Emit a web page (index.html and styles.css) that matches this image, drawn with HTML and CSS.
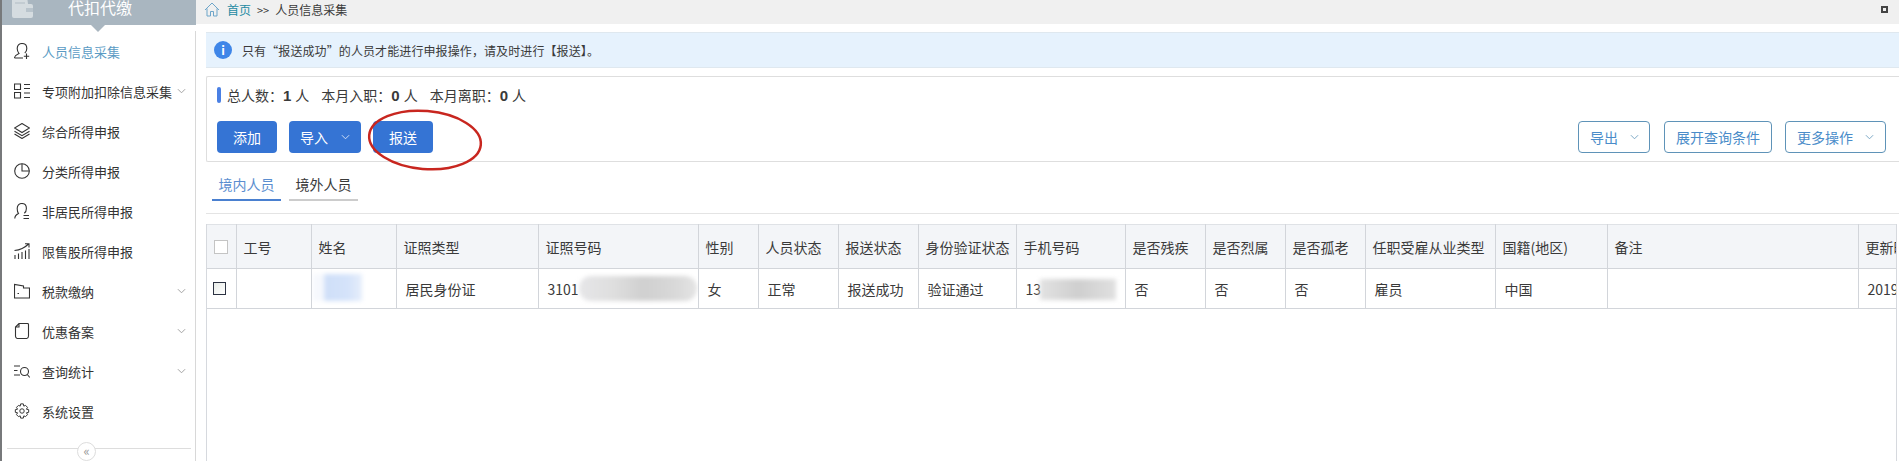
FILE: index.html
```html
<!DOCTYPE html>
<html lang="zh-CN">
<head>
  <meta charset="UTF-8" />
  <title>人员信息采集</title>
  <link rel="stylesheet" href="styles.css">
</head>
<body>
  <aside class="sidebar">
    <div class="brand">
      <svg class="brand-icon" width="21" height="18" viewBox="0 0 21 18"><path d="M0 0h15.500l.5 4h3a2 2 0 0 1 2 2v10a2 2 0 0 1-2 2H2a2 2 0 0 1-2-2z" fill="#d5dce0"/><path d="M3 2h10v2H3z" fill="#c3ccd2"/><rect x="14" y="8" width="7" height="4" fill="#b9c4cc"/></svg>
      <span class="brand-name">代扣代缴</span>
    </div>
    <ul class="menu">
      <li class="menu-item active">
        <svg class="menu-icon" viewBox="0 0 16 16"><path d="M.500 15c0-2.500 2.500-3.500 4.500-4.500C3.800 9 3.200 7.500 3.200 5.500 3.200 2.500 5 .500 8 .500s4.800 2 4.800 5c0 2-.700 3.500-2 4.500M.500 15H9M12.500 10.500V16M9.800 13.200H15.200"/></svg>
        <span>人员信息采集</span>
      </li>
      <li class="menu-item">
        <svg class="menu-icon" viewBox="0 0 16 16"><path d="M.500 1h6v5.500h-6zM.500 9.500h6V15h-6zM10 1.500h6M10 5.500h6M10 10h6M10 14.500h6"/></svg>
        <span>专项附加扣除信息采集</span>
        <svg class="chevron" viewBox="0 0 10 6"><path d="M1 1l4 4 4-4"/></svg>
      </li>
      <li class="menu-item">
        <svg class="menu-icon" viewBox="0 0 16 16"><path d="M8 .500l7.500 4.500L8 9.500.500 5zM.500 8.200L8 12.700l7.500-4.500M.500 11L8 15.500l7.500-4.500"/></svg>
        <span>综合所得申报</span>
      </li>
      <li class="menu-item">
        <svg class="menu-icon" viewBox="0 0 16 16"><circle cx="8" cy="8" r="7.300"/><path d="M8 .700V8h7.300"/></svg>
        <span>分类所得申报</span>
      </li>
      <li class="menu-item">
        <svg class="menu-icon" viewBox="0 0 16 16"><path d="M.800 15.500c0-2.500 1.700-4 3.700-5C3.700 9.500 3.200 7.500 3.200 5.500 3.200 2.500 5 .500 7.800.500s4.600 2 4.600 5c0 2-.800 3.800-2.100 4.800M9.500 12.500h5.500M9.500 15.500h5.500"/></svg>
        <span>非居民所得申报</span>
      </li>
      <li class="menu-item">
        <svg class="menu-icon" viewBox="0 0 16 16"><path d="M1 16v-4M4.500 16v-5.500M8 16V9M11.500 16V7.500M15 16V6M.500 7.500C6 7 10.500 5 14.500 1M11 .800h4V4.500"/></svg>
        <span>限售股所得申报</span>
      </li>
      <li class="menu-item">
        <svg class="menu-icon" viewBox="0 0 16 16"><path d="M.500 15V1.500l9 1.500v2h6v10zM3.500 10.500h1.500"/></svg>
        <span>税款缴纳</span>
        <svg class="chevron" viewBox="0 0 10 6"><path d="M1 1l4 4 4-4"/></svg>
      </li>
      <li class="menu-item">
        <svg class="menu-icon" viewBox="0 0 16 16"><path d="M5 .500h8.500a1 1 0 0 1 1 1V13a2.500 2.500 0 0 1-2.500 2.500H4A2.500 2.500 0 0 1 1.500 13V4zM1.500 4H5V.500"/></svg>
        <span>优惠备案</span>
        <svg class="chevron" viewBox="0 0 10 6"><path d="M1 1l4 4 4-4"/></svg>
      </li>
      <li class="menu-item">
        <svg class="menu-icon" viewBox="0 0 16 16"><path d="M0 3h6M0 7.500h3.500M0 12h6"/><circle cx="10.500" cy="8.500" r="4"/><path d="M13.300 11.500l2.500 3"/></svg>
        <span>查询统计</span>
        <svg class="chevron" viewBox="0 0 10 6"><path d="M1 1l4 4 4-4"/></svg>
      </li>
      <li class="menu-item">
        <svg class="menu-icon" viewBox="0 0 18 18"><path d="M7.500 1h3l.5 2.500 2-.8 2.200 2.200-1.200 2.100 2.500.5v3l-2.500.5 1.200 2.100-2.200 2.200-2-.8-.5 2.500h-3L7 14.500l-2 .8-2.200-2.200L4 11l-2.500-.5v-3L4 7 2.800 4.900 5 2.700l2 .8z"/><circle cx="9" cy="9" r="2.500"/></svg>
        <span>系统设置</span>
      </li>
    </ul>
    <div class="collapse"><span class="collapse-btn">«</span></div>
  </aside>

  <main class="main">
    <div class="crumbs">
      <svg class="home" width="16" height="15" viewBox="0 0 16 15"><path d="M1 8l7-7 7 7M3 6.500V14h3.500V9.500h3V14H13V6.500"/></svg>
      <a class="crumb-link">首页</a>
      <span class="crumb-sep">&gt;&gt;</span>
      <span>人员信息采集</span>
      <span class="restore"></span>
    </div>

    <div class="alert">
      <span class="alert-icon">i</span>
      <span class="alert-text">只有“报送成功”的人员才能进行申报操作，请及时进行【报送】。</span>
    </div>

    <section class="panel">
      <div class="stats">
        <span class="stat-bar"></span>
        <span>总人数：<b>1</b>人</span>
        <span>本月入职：<b>0</b>人</span>
        <span>本月离职：<b>0</b>人</span>
      </div>
      <div class="toolbar">
        <button class="btn">添加</button>
        <button class="btn btn-drop">导入<svg class="chevron" viewBox="0 0 10 6"><path d="M1 1l4 4 4-4"/></svg></button>
        <button class="btn">报送</button>
        <button class="btn-line first">导出<svg class="chevron" viewBox="0 0 10 6"><path d="M1 1l4 4 4-4"/></svg></button>
        <button class="btn-line">展开查询条件</button>
        <button class="btn-line">更多操作<svg class="chevron" viewBox="0 0 10 6"><path d="M1 1l4 4 4-4"/></svg></button>
      </div>
    </section>

    <div class="tabs">
      <span class="tab active">境内人员</span>
      <span class="tab">境外人员</span>
    </div>

    <div class="table-wrap">
      <table class="people">
        <thead>
          <tr>
            <th><span class="check"></span></th>
            <th>工号</th>
            <th>姓名</th>
            <th>证照类型</th>
            <th>证照号码</th>
            <th>性别</th>
            <th>人员状态</th>
            <th>报送状态</th>
            <th>身份验证状态</th>
            <th>手机号码</th>
            <th>是否残疾</th>
            <th>是否烈属</th>
            <th>是否孤老</th>
            <th>任职受雇从业类型</th>
            <th>国籍(地区)</th>
            <th>备注</th>
            <th>更新时间</th>
          </tr>
        </thead>
        <tbody>
          <tr>
            <td><span class="check dark"></span></td>
            <td></td>
            <td><span class="smudge smudge-name"></span></td>
            <td>居民身份证</td>
            <td>3101<span class="smudge smudge-id"></span></td>
            <td>女</td>
            <td>正常</td>
            <td>报送成功</td>
            <td>验证通过</td>
            <td>13<span class="smudge smudge-phone"></span></td>
            <td>否</td>
            <td>否</td>
            <td>否</td>
            <td>雇员</td>
            <td>中国</td>
            <td></td>
            <td>2019-01-01</td>
          </tr>
        </tbody>
      </table>
    </div>
  </main>

  <svg class="circled" width="124" height="72" viewBox="0 0 124 72"><ellipse cx="62" cy="36" rx="56" ry="29" transform="rotate(5 62 36)"/></svg>
</body>
</html>
```

FILE: styles.css
```css
* {
  box-sizing: border-box;
}

html, body {
  height: 100%;
}

body {
  margin: 0;
  display: flex;
  overflow: hidden;
  background: #fff;
  color: #3a3a3a;
  font-family: "Noto Sans CJK SC", "Noto Sans", sans-serif;
  font-size: 14px;
}

/* sidebar */
.sidebar {
  position: relative;
  width: 196px;
  flex-shrink: 0;
  display: flex;
  flex-direction: column;
  border-left: 2px solid #77797b;
}

.brand {
  position: relative;
  height: 25px;
  flex-shrink: 0;
  display: flex;
  background: #a9b6c0;
}

.brand::after {
  content: "";
  position: absolute;
  left: 89px;
  top: 25px;
  border: 7px solid transparent;
  border-top-color: #a9b6c0;
  border-bottom: none;
}

.brand-icon {
  margin: 0 0 0 10px;
  flex-shrink: 0;
}

.brand-name {
  margin-left: 35px;
  height: 25px;
  line-height: 14px;
  font-size: 16px;
  color: #fff;
  overflow: hidden;
  white-space: nowrap;
}

.menu {
  flex: 1;
  list-style: none;
  margin: 6px 0 0;
  padding: 0;
  border-right: 1px solid #d8d8d8;
}

.menu-item {
  height: 40px;
  display: flex;
  align-items: center;
  padding-left: 12px;
  font-size: 13px;
  color: #333;
}

.menu-item .menu-icon {
  width: 16px;
  height: 16px;
  margin-right: 12px;
  flex-shrink: 0;
  fill: none;
  stroke: #333;
  stroke-width: 1.100;
}

.menu-item.active {
  color: #5a9bc4;
}

.chevron {
  width: 9px;
  height: 6px;
  flex-shrink: 0;
  fill: none;
  stroke: #999;
  stroke-width: 1;
}

.menu-item .chevron {
  margin-left: auto;
  margin-right: 9px;
}

.collapse {
  position: absolute;
  left: 5px;
  right: 5px;
  top: 448px;
  border-top: 1px solid #ddd;
}

.collapse-btn {
  position: absolute;
  left: 70px;
  top: -7px;
  width: 19px;
  height: 19px;
  border: 1px solid #ddd;
  border-radius: 50%;
  background: #fff;
  color: #999;
  font-size: 13px;
  line-height: 15px;
  text-align: center;
}

/* main column */
.main {
  flex: 1;
  min-width: 0;
  display: flex;
  flex-direction: column;
}

.crumbs {
  height: 24px;
  flex-shrink: 0;
  padding: 0 0 5px 8px;
  display: flex;
  align-items: center;
  background: #f0f0f0;
  font-size: 12px;
}

.home {
  fill: none;
  stroke: #6da5c9;
  stroke-width: 1;
  margin-right: 7px;
}

.crumb-link {
  color: #1f8ba3;
}

.crumb-sep {
  margin: 0 6px;
  font-size: 11px;
}

.restore {
  width: 7px;
  height: 7px;
  margin-left: auto;
  margin-right: 11px;
  border: 2px solid #444;
}

.alert {
  height: 36px;
  flex-shrink: 0;
  margin: 8px 0 0 10px;
  padding-left: 8px;
  display: flex;
  align-items: center;
  gap: 10px;
  background: #e6f2fd;
  border-top: 1px solid #dfe8ef;
  border-bottom: 1px solid #dfe8ef;
  font-size: 12px;
}

.alert-text {
  letter-spacing: .1px;
}

.alert-icon {
  width: 18px;
  height: 18px;
  border-radius: 50%;
  background: #3f86e8;
  color: #fff;
  font-weight: 700;
  line-height: 18px;
  text-align: center;
}

.panel {
  height: 86px;
  flex-shrink: 0;
  margin: 8px 0 0 10px;
  padding: 0 0 0 10px;
  border: 1px solid #dedede;
  border-right: none;
  border-radius: 2px 0 0 2px;
}

.stats {
  height: 44px;
  padding-bottom: 9px;
  display: flex;
  align-items: center;
  gap: 12px;
}

.stats b {
  margin-right: 4px;
  font-family: "Liberation Sans", sans-serif;
  font-size: 15px;
}

.stat-bar {
  width: 4px;
  height: 16px;
  margin-right: -6px;
  border-radius: 2px;
  background: #4a80e4;
}

.toolbar {
  display: flex;
  align-items: center;
  gap: 12px;
}

.btn, .btn-line {
  height: 32px;
  font-family: inherit;
  font-size: 14px;
  border-radius: 4px;
  white-space: nowrap;
  cursor: pointer;
}

.btn {
  width: 60px;
  padding: 0;
  border: none;
  background: #3574d4;
  color: #fff;
}

.btn-drop {
  width: 72px;
  display: flex;
  align-items: center;
  padding-left: 11px;
}

.btn-drop .chevron {
  margin-left: 13px;
  stroke: #dfe9f8;
}

.btn-line {
  padding: 0 11px;
  display: flex;
  align-items: center;
  background: #fff;
  border: 1px solid #5f93b8;
  color: #4a8cc9;
}

.btn-line .chevron {
  margin-left: 12px;
  stroke: #6f9fc0;
}

.btn-line.first {
  margin-left: auto;
  margin-right: 2px;
  width: 72px;
  padding-right: 8px;
}

.btn-line:last-child {
  margin-left: 1px;
  margin-right: 13px;
}

/* tabs + table */
.tabs {
  height: 52px;
  flex-shrink: 0;
  margin-left: 10px;
  padding: 8px 0 0 6px;
  display: flex;
  gap: 8px;
  border-bottom: 1px solid #e4e4e4;
}

.tab {
  width: 69px;
  height: 31px;
  line-height: 28px;
  text-align: center;
  border-bottom: 2px solid #ccc;
}

.tab.active {
  color: #5b8ed0;
  border-bottom-color: #4a80d0;
}

.table-wrap {
  flex: 1;
  width: 1691px;
  margin: 10px 0 0 10px;
  border-left: 1px solid #d6d9de;
  border-right: 1px solid #d6d9de;
  overflow: hidden;
}

.people {
  width: 1689px;
  table-layout: fixed;
  border-collapse: collapse;
}

.people th, .people td {
  border: 1px solid #d2d5da;
  border-top: none;
  white-space: nowrap;
  overflow: hidden;
  text-align: left;
  font-weight: 400;
}

.people tr > :first-child {
  border-left: none;
}

.people tr > :last-child {
  border-right: none;
}

.people th {
  height: 44px;
  padding: 0 0 0 7px;
  background: #f3f5f8;
  border-top: 1px solid #dfe2e6;
}

.people td {
  height: 40px;
  padding: 0 0 0 9px;
  position: relative;
}

.people th:nth-child(1) { width: 29px; }
.people th:nth-child(2) { width: 75px; }
.people th:nth-child(3) { width: 85px; }
.people th:nth-child(4) { width: 142px; }
.people th:nth-child(5) { width: 160px; }
.people th:nth-child(6) { width: 60px; }
.people th:nth-child(7) { width: 80px; }
.people th:nth-child(8) { width: 80px; }
.people th:nth-child(9) { width: 98px; }
.people th:nth-child(10) { width: 109px; }
.people th:nth-child(11) { width: 80px; }
.people th:nth-child(12) { width: 80px; }
.people th:nth-child(13) { width: 80px; }
.people th:nth-child(14) { width: 130px; }
.people th:nth-child(15) { width: 112px; }
.people th:nth-child(16) { width: 251px; }
.people th:nth-child(17) { width: 38px; }

.check {
  display: block;
  width: 14px;
  height: 14px;
  background: #fff;
  border: 1px solid #c4c4c4;
}

.check.dark {
  margin-left: -3px;
  width: 13px;
  height: 13px;
  border-color: #2c3242;
  background: linear-gradient(135deg, #e8ece8, #fff);
}

/* blurred-out personal data in the screenshot */
.smudge {
  position: absolute;
  filter: blur(2px);
}

.smudge-name {
  left: 1px;
  top: 5px;
  width: 49px;
  height: 27px;
  background: linear-gradient(90deg, #f6f8fd 20%, #cfdff8 26%, #d5e3fa 72%, #e6eefb 100%);
}

.smudge-id {
  left: 40px;
  top: 7px;
  width: 118px;
  height: 25px;
  border-radius: 12px;
  background: linear-gradient(90deg, #e6e6e8, #dedede 30%, #d0d0d0 55%, #d8d8d8 80%, #e4e4e4);
}

.smudge-phone {
  left: 23px;
  top: 10px;
  width: 76px;
  height: 21px;
  background: linear-gradient(90deg, #e2e2e2, #cfcfcf 50%, #e0e0e0);
}

/* red hand-drawn circle on top of the screenshot */
.circled {
  position: absolute;
  left: 363px;
  top: 104px;
  fill: none;
  stroke: #c8261f;
  stroke-width: 2.500;
}
```
